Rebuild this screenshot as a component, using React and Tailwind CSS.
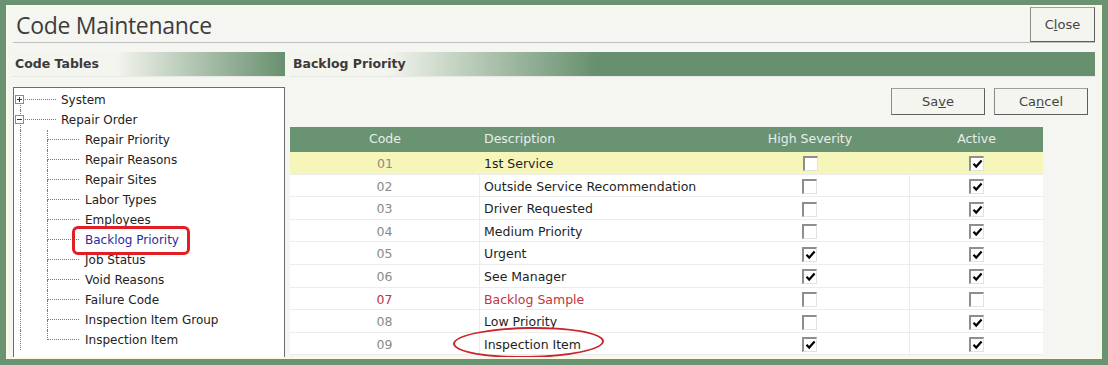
import React from 'react';

const BODY = { fontFamily: '"DejaVu Sans", Verdana, sans-serif' };

const treeChildren = [
  'Repair Priority',
  'Repair Reasons',
  'Repair Sites',
  'Labor Types',
  'Employees',
  'Backlog Priority',
  'Job Status',
  'Void Reasons',
  'Failure Code',
  'Inspection Item Group',
  'Inspection Item',
];

const rows = [
  ['01', '1st Service', false, true],
  ['02', 'Outside Service Recommendation', false, true],
  ['03', 'Driver Requested', false, true],
  ['04', 'Medium Priority', false, true],
  ['05', 'Urgent', true, true],
  ['06', 'See Manager', true, true],
  ['07', 'Backlog Sample', false, false],
  ['08', 'Low Priority', false, true],
  ['09', 'Inspection Item', true, true],
];

function Expander({ open }) {
  return (
    <span className="absolute left-[-5px] top-[5px] w-[9px] h-[9px] border border-[#8a8a8a] bg-white flex items-center justify-center">
      <span className="absolute w-[5px] h-px bg-[#333]" />
      {!open && <span className="absolute w-px h-[5px] bg-[#333]" />}
    </span>
  );
}

// root node: System / Repair Order
function RootRow({ label, open, first }) {
  return (
    <div className="flex h-[20px] items-center">
      <div className="w-[6px]" />
      <div className="relative w-[36px] h-full flex flex-col">
        <div className={`h-1/2 border-b border-dotted border-[#7a7a7a] ${first ? '' : 'border-l'}`} />
        <div className="h-1/2 border-l border-dotted border-[#7a7a7a]" />
        <Expander open={open} />
      </div>
      <span className="ml-[5px] text-[12px] text-[#222] whitespace-nowrap">{label}</span>
    </div>
  );
}

function ChildRow({ label, last, selected }) {
  return (
    <div className="flex h-[20px] items-center">
      <div className="w-[6px]" />
      <div className="w-[27px] h-full border-l border-dotted border-[#7a7a7a]" />
      <div className="w-[32px] h-full flex flex-col">
        <div className="h-1/2 border-l border-b border-dotted border-[#7a7a7a]" />
        <div className={`h-1/2 border-dotted border-[#7a7a7a] ${last ? '' : 'border-l'}`} />
      </div>
      {selected ? (
        <span className="relative ml-[6px] text-[12px] text-[#2b2ba0] whitespace-nowrap">
          {label}
          <span className="absolute left-[-13px] right-[-11px] top-[-5px] bottom-[-6px] border-[3px] border-[#e01e24] rounded-[6px]" />
        </span>
      ) : (
        <span className="ml-[6px] text-[12px] text-[#222] whitespace-nowrap">{label}</span>
      )}
    </div>
  );
}

function Checkbox({ checked }) {
  return (
    <span className="inline-flex w-[15px] h-[15px] bg-white border-t-2 border-l-2 border-r border-b border-t-[#8e8e8e] border-l-[#8e8e8e] border-r-[#e2e2e2] border-b-[#e2e2e2] items-center justify-center">
      {checked && (
        <svg width="11" height="10" viewBox="0 0 11 10">
          <path d="M1.5 4.8 L4.2 7.6 L9.6 1.6" stroke="#000" strokeWidth="2.2" fill="none" />
        </svg>
      )}
    </span>
  );
}

function Btn({ children, className }) {
  return (
    <button
      className={`h-full bg-[#f4f5ef] border border-t-[#a0a0a0] border-l-[#8a8a8a] border-r-[#5e5e5e] border-b-[#5e5e5e] text-[13px] text-[#444] ${className}`}
      style={BODY}
    >
      {children}
    </button>
  );
}

export default function App() {
  return (
    <div className="w-[1108px] h-[365px] bg-[#6a9373] pt-[5px] px-[6px] pb-[6px]" style={BODY}>
      <div className="h-full border-2 border-[#fbfbe2] bg-[#f5f6f1] overflow-hidden flex flex-col">
        {/* title */}
        <div className="h-[35px] flex items-center justify-between pl-[8px] pr-[5px] shrink-0">
          <h1
            className="text-[23px] tracking-[-0.3px] text-[#3d3d3d] leading-none pt-px"
            style={{ fontFamily: '"Open Sans", sans-serif' }}
          >
            Code Maintenance
          </h1>
          <Btn className="w-[65px] h-[24px]">
            C<span className="underline">l</span>ose
          </Btn>
        </div>
        <div className="mx-[5px] h-px bg-[#bfbfbf] shrink-0" />

        {/* section headers */}
        <div className="mt-[9px] flex pl-[4px] pr-[5px] gap-[5px] h-[25px] shrink-0">
          <div className="w-[273px] bg-linear-to-r from-[#f4f5ef] from-[38%] to-[#67906f] flex items-center pl-[3px] border-b border-[#e4e8e0]">
            <span className="text-[12.5px] font-bold text-[#3a3a3a] pt-px">Code Tables</span>
          </div>
          <div className="flex-1 bg-linear-to-r from-[#f4f5ef] from-[12%] to-[#67906f] to-[38%] flex items-center pl-[3px] border-b border-[#e4e8e0]">
            <span className="text-[12.5px] font-bold text-[#3a3a3a] pt-px">Backlog Priority</span>
          </div>
        </div>

        {/* body */}
        <div className="mt-[10px] flex pl-[5px] pr-[5px] gap-[5px] flex-1 min-h-0">
          {/* tree */}
          <div className="w-[272px] h-[300px] shrink-0 bg-white border-l border-t border-r border-[#6c6c6c] pt-[2px]">
            <RootRow label="System" first />
            <RootRow label="Repair Order" open />
            {treeChildren.map((t, i) => (
              <ChildRow key={t} label={t} last={i === treeChildren.length - 1} selected={t === 'Backlog Priority'} />
            ))}
          </div>

          {/* grid side */}
          <div className="flex-1 flex flex-col">
            <div className="h-[27px] mt-px flex justify-end gap-[9px] pr-[7px] shrink-0">
              <Btn className="w-[94px]">
                Sa<span className="underline">v</span>e
              </Btn>
              <Btn className="w-[94px]">
                Ca<span className="underline">n</span>cel
              </Btn>
            </div>

            <div className="mt-[12px] w-[753px]">
              <div className="grid grid-cols-[190px_230px_200px_133px] h-[25px] bg-[#6a9373] text-[12.5px] text-[#e9eee8] items-center">
                <div className="text-center">Code</div>
                <div className="pl-[4px]">Description</div>
                <div className="text-center">High Severity</div>
                <div className="text-center">Active</div>
              </div>
              {rows.map(([code, desc, high, active], i) => {
                const red = code === '07';
                return (
                  <div
                    key={code}
                    className={`grid grid-cols-[190px_230px_200px_133px] h-[22.6px] items-center border-b border-[#ececec] text-[12.5px] ${
                      i === 0 ? 'bg-[#f6f5ba]' : 'bg-white'
                    }`}
                  >
                    <div className={`h-full flex items-center justify-center pt-[3px] ${i === 0 ? '' : 'border-r border-[#ececec]'} ${red ? 'text-[#c0353b]' : 'text-[#8a8a8a]'}`}>
                      {code}
                    </div>
                    <div className={`pl-[4px] pt-[3px] whitespace-nowrap ${red ? 'text-[#c0353b]' : 'text-[#1e1e1e]'}`}>
                      {desc === 'Inspection Item' ? (
                        <span className="relative">
                          {desc}
                          <span className="absolute left-[-31px] right-[-23px] top-[-10px] bottom-[-6px] border-2 border-[#c8262c] rounded-[50%] -rotate-1" />
                        </span>
                      ) : (
                        desc
                      )}
                    </div>
                    <div className={`h-full flex items-center justify-center pt-[2px] ${i === 0 ? '' : 'border-r border-[#ececec]'}`}>
                      <Checkbox checked={high} />
                    </div>
                    <div className="h-full flex items-center justify-center pt-[2px]">
                      <Checkbox checked={active} />
                    </div>
                  </div>
                );
              })}
            </div>
          </div>
        </div>
      </div>
    </div>
  );
}
